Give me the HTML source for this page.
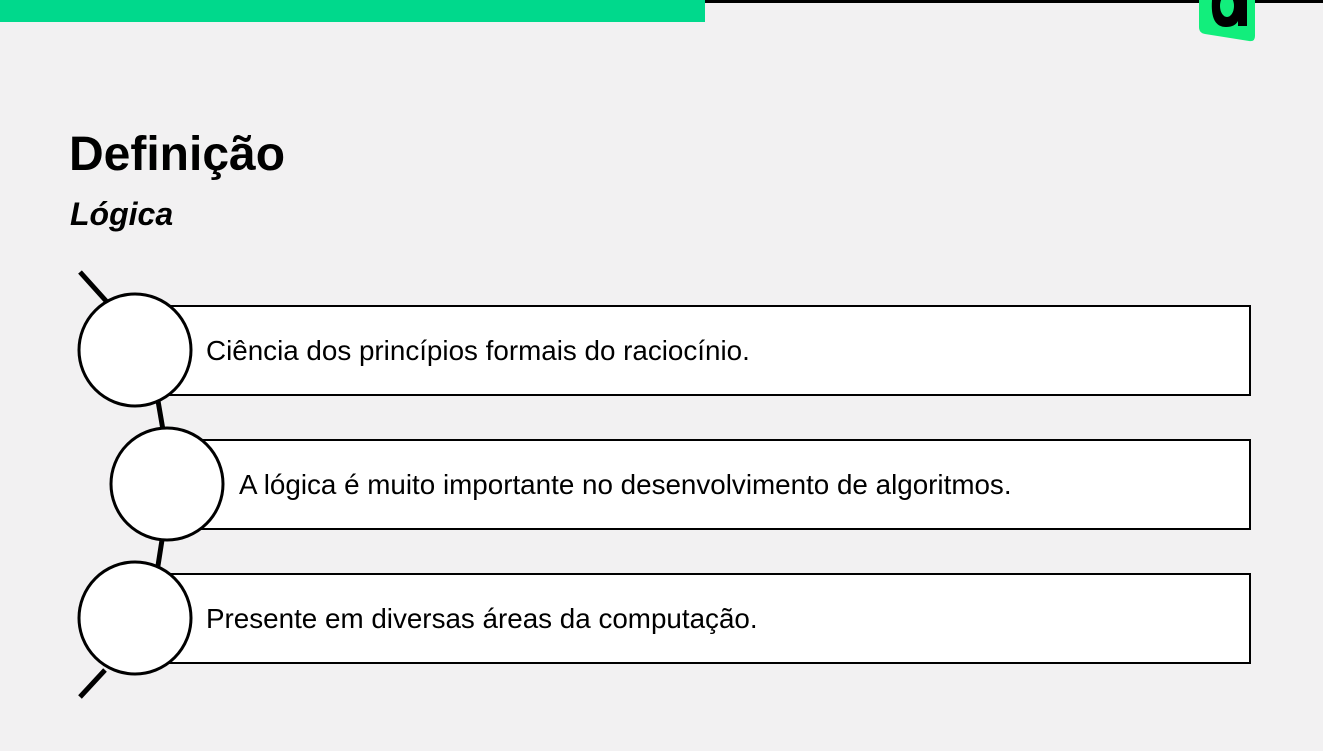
<!DOCTYPE html>
<html><head><meta charset="utf-8"><style>
body{margin:0;width:1323px;height:751px;background:#f2f1f2;position:relative;overflow:hidden;font-family:"Liberation Sans",sans-serif}
.t{position:absolute;color:#000}
.box{position:absolute;background:#fff;border:2px solid #000;box-sizing:border-box;font-size:27.8px;display:flex;align-items:center}
</style></head><body>
<div style="position:absolute;left:0;top:0;width:1323px;height:3px;background:#000"></div>
<div style="position:absolute;left:0;top:0;width:705px;height:22px;background:#00d98c"></div>
<svg style="position:absolute;left:1195px;top:0" width="65" height="45">
<path d="M4 0 L60 0 L60 36 Q60 42 54 41 L10 34 Q4 33 4 27 Z" fill="#12ee7c"/>
<path d="M17 0 Q15 27 31 27 Q40 27 43 21 L43 26 L52 26 L52 0 Z" fill="#000"/>
<ellipse cx="32" cy="6" rx="7" ry="11" fill="#12ee7c"/>
</svg>
<div class="t" style="left:69px;top:127px;font-size:48px;font-weight:bold">Definição</div>
<div class="t" style="left:70px;top:196px;font-size:32px;font-weight:bold;font-style:italic">Lógica</div>
<div class="box" style="left:160px;top:305px;width:1091px;height:91px;padding-left:44px">Ciência dos princípios formais do raciocínio.</div>
<div class="box" style="left:195px;top:439px;width:1056px;height:91px;padding-left:42px">A lógica é muito importante no desenvolvimento de algoritmos.</div>
<div class="box" style="left:160px;top:573px;width:1091px;height:91px;padding-left:44px">Presente em diversas áreas da computação.</div>
<svg style="position:absolute;left:0;top:0" width="300" height="751">
<g stroke="#000" stroke-width="5" fill="none">
<path d="M80 272 L107 302"/><path d="M157 395 L163 430"/><path d="M162 540 L157 572"/><path d="M105 670 L80 697"/>
</g>
<g stroke="#000" stroke-width="3" fill="#fff">
<circle cx="135" cy="350" r="56"/><circle cx="167" cy="484" r="56"/><circle cx="135" cy="618" r="56"/>
</g></svg>
</body></html>
